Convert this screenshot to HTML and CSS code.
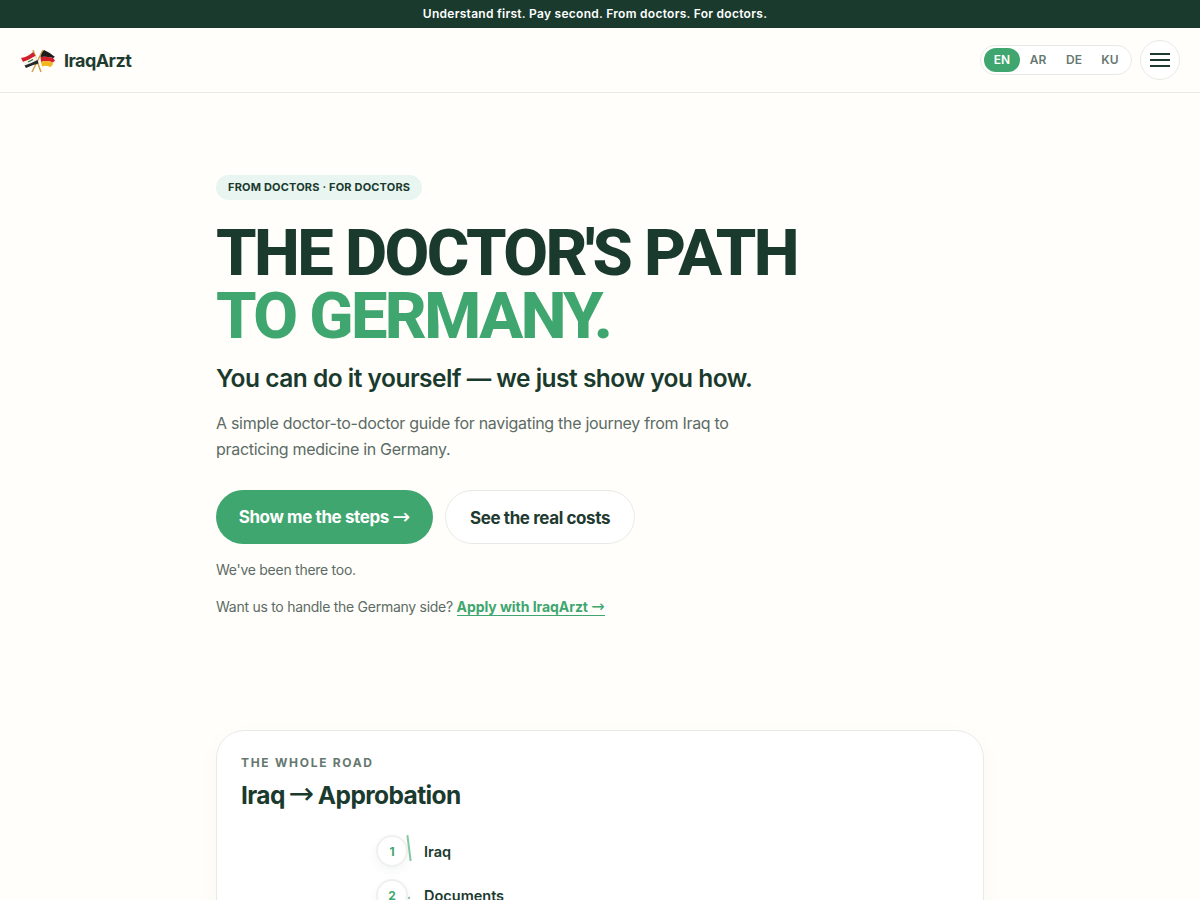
FILE: index.html
```html
<!DOCTYPE html>
<html lang="en">
<head>
    <meta charset="UTF-8">
    <meta name="viewport" content="width=device-width, initial-scale=1.0">
    <title>IraqArzt</title>
    <link rel="stylesheet" href="styles.css">
</head>
<body>
    <div class="topbar">Understand first. Pay second. From doctors. For doctors.</div>

    <header class="nav">
        <a class="brand" href="#">
            <svg class="flags" width="36" height="26" viewBox="0 0 36 26">
                <path d="M12 25 L23 3" stroke="#cf9f52" stroke-width="1.5"/>
                <path d="M21 25 L13 3" stroke="#cf9f52" stroke-width="1.5"/>
                <path d="M1 11 Q8 10 13 5 L15.5 9 Q9 13 3 15 Z" fill="#d0202c"/>
                <path d="M3 15 Q9 13 15.5 9 L17.5 13 Q11 16.5 4.5 18.5 Z" fill="#f6f1ea"/>
                <path d="M4.5 18.5 Q11 16.5 17.5 13 L18.5 16.5 Q13 17.5 6 21 Z" fill="#25262a"/>
                <path d="M8 15 L13 12.5" stroke="#2f7a45" stroke-width="1.1"/>
                <path d="M20.5 10 Q21 6 24 3 Q29 5 35 10 L33 11 Q26 9 20.5 10 Z" fill="#1d1b1b"/>
                <path d="M20.5 10 Q26 9 33 11 L35 13.5 L33 15.5 Q26 13 21 15 Z" fill="#d3202a"/>
                <path d="M21 15 Q26 13 33 15.5 Q33 18.5 30 20 Q26 18 22 19.5 Z" fill="#f2b61f"/>
            </svg>
            <span class="brand-name">IraqArzt</span>
        </a>
        <div class="nav-right">
            <div class="langs">
                <span class="lang active">EN</span>
                <span class="lang">AR</span>
                <span class="lang">DE</span>
                <span class="lang">KU</span>
            </div>
            <button class="menu-btn" aria-label="Menu">
                <span></span><span></span><span></span>
            </button>
        </div>
    </header>

    <main class="wrap">
        <section class="hero">
            <div class="pill">FROM DOCTORS · FOR DOCTORS</div>
            <h1>THE DOCTOR'S PATH<br><span class="green">TO GERMANY.</span></h1>
            <p class="sub">You can do it yourself — we just show you how.</p>
            <p class="lead">A simple doctor-to-doctor guide for navigating the journey from Iraq to practicing medicine in Germany.</p>
            <div class="actions">
                <a class="btn btn-primary" href="#">Show me the steps <span class="arrow">→</span></a>
                <a class="btn btn-ghost" href="#">See the real costs</a>
            </div>
            <p class="note">We've been there too.</p>
            <p class="note apply">Want us to handle the Germany side? <a href="#">Apply with IraqArzt <span class="arrow">→</span></a></p>
        </section>

        <section class="road">
            <div class="eyebrow">THE WHOLE ROAD</div>
            <h2>Iraq <span class="arrow">→</span> Approbation</h2>
            <ol class="steps">
                <li class="step"><span class="num">1</span><span class="tick"></span><span class="step-name">Iraq</span></li>
                <li class="step"><span class="num">2</span><span class="tick tick-small"></span><span class="step-name">Documents</span></li>
            </ol>
        </section>
    </main>
</body>
</html>
```

FILE: styles.css
```css
* { box-sizing: border-box; }
html, body { height: 900px; overflow: hidden; }
body { margin: 0; background: #fffefa; color: #1a3a2e; font-family: Inter, "Noto Sans", sans-serif; }
a { text-decoration: none; color: inherit; }
.arrow { font-family: "DejaVu Sans", sans-serif; font-size: 1.25em; font-weight: 400; line-height: 0; letter-spacing: 0; }

.topbar { height: 28px; padding: 0 10px 1px 0; background: #1a3a2e; color: #fff; font-size: 12px; font-weight: 600; letter-spacing: 0.28px; display: flex; align-items: center; justify-content: center; }

.nav { height: 65px; padding: 0 20px; border-bottom: 1px solid #e9e9e6; display: flex; align-items: center; justify-content: space-between; }
.brand { display: flex; align-items: center; gap: 8px; }
.flags { display: block; }
.brand-name { font-size: 18px; font-weight: 700; letter-spacing: -0.55px; color: #1f3a30; }
.nav-right { display: flex; align-items: center; gap: 8px; }
.langs { display: flex; align-items: center; height: 30px; padding: 0 3px; background: #fff; border: 1px solid #e9e9e6; border-radius: 15px; }
.lang { width: 36px; height: 24px; padding-bottom: 1px; border-radius: 12px; font-size: 12px; font-weight: 600; color: #667770; display: flex; align-items: center; justify-content: center; }
.lang.active { background: #3fa66f; color: #fff; }
.menu-btn { width: 40px; height: 40px; padding: 0; background: #fff; border: 1px solid #e9e9e6; border-radius: 50%; display: flex; flex-direction: column; align-items: center; justify-content: center; gap: 4px; }
.menu-btn span { display: block; width: 20px; height: 2px; background: #1a3a2e; }

.wrap { width: 768px; margin: 0 auto; }
.hero { padding-top: 82px; }
.pill { display: inline-block; height: 25px; padding: 0 12px; line-height: 25px; background: #e8f5f0; border-radius: 13px; font-size: 11px; font-weight: 700; letter-spacing: 0.18px; color: #1a3a2e; }
h1 { margin: 22px 0 0; font-family: Roboto, Inter, sans-serif; font-size: 65px; line-height: 63px; font-weight: 800; letter-spacing: -2.55px; color: #1a3a2e; }
.green { color: #3fa66f; }
.sub { margin: 13px 0 0; font-size: 24.5px; line-height: 34px; font-weight: 600; letter-spacing: -0.5px; color: #1a3a2e; }
.lead { margin: 15px 0 0; width: 560px; font-size: 16px; line-height: 26px; letter-spacing: -0.3px; color: #5c6b65; }
.actions { display: flex; gap: 12px; margin-top: 28px; }
.btn { height: 54px; border-radius: 27px; display: flex; align-items: center; justify-content: center; font-size: 17px; font-weight: 700; letter-spacing: -0.4px; }
.btn-primary { width: 217px; background: #3fa66f; color: #fff; white-space: pre; }
.btn-ghost { width: 190px; padding-top: 1px; background: #fff; border: 1px solid #e9e9e6; color: #1f3a30; }
.note { margin: 16px 0 0; font-size: 14px; line-height: 20px; letter-spacing: -0.27px; color: #5c6b65; }
.apply { margin-top: 17px; }
.apply a { color: #3fa66f; font-weight: 700; letter-spacing: -0.05px; border-bottom: 1px solid #3fa66f; }
.apply .arrow { font-size: 1.15em; }

.road { margin-top: 113px; padding: 24px; height: 400px; background: #fff; border: 1px solid #e9e9e6; border-radius: 28px; box-shadow: 0 8px 24px rgba(26, 58, 46, 0.03); }
.eyebrow { font-size: 12px; line-height: 16px; font-weight: 700; letter-spacing: 1.7px; color: #667770; }
h2 { margin: 6px 0 0; font-size: 24.5px; line-height: 36px; font-weight: 700; letter-spacing: -0.6px; word-spacing: -1.5px; color: #1a3a2e; }
.steps { list-style: none; margin: 22px 0 0; padding: 0 0 0 135px; display: flex; flex-direction: column; gap: 12px; }
.step { display: flex; align-items: center; height: 32px; }
.num { flex: none; width: 32px; height: 32px; border-radius: 50%; background: #fff; border: 2px solid #f0f1ee; box-shadow: 0 4px 10px rgba(26, 58, 46, 0.05); display: flex; align-items: center; justify-content: center; font-size: 12px; font-weight: 700; color: #3fa66f; }
.tick { display: block; flex: none; align-self: flex-start; width: 1.5px; height: 26px; margin: 0 14.5px 0 0; background: #82c7a0; transform: rotate(-7deg); }
.tick-small { height: 2px; margin-top: 18px; }
.step-name { font-size: 14.5px; font-weight: 600; color: #1a3a2e; }
```
